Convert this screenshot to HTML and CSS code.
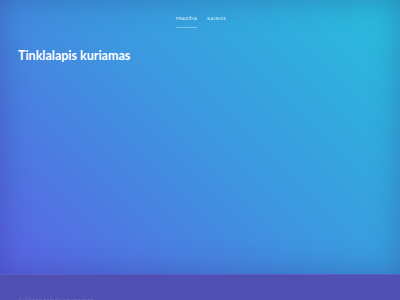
FILE: index.html
```html
<!DOCTYPE html>
<html lang="lt">
  <head>
    <meta charset="UTF-8" />
    <meta name="viewport" content="width=device-width, initial-scale=1.0" />
    <title>Tinklalapis kuriamas</title>
    <link rel="stylesheet" href="styles.css">
  </head>
  <body>
    <div class="hero">
      <nav class="nav">
        <a href="#" class="nav-link active">Pradžia</a>
        <a href="#" class="nav-link">Kainos</a>
      </nav>
      <div class="content">
        <h1>Tinklalapis kuriamas</h1>
      </div>
    </div>
    <footer class="footer">
      <p>© Visos teisės saugomos</p>
    </footer>
  </body>
</html>
```

FILE: styles.css
```css
body {
  font-family: Lato, "Open Sans", sans-serif;
  margin: 0;
  background-color: #4f50b1;
}
.hero {
  height: 274px;
  background: linear-gradient(45deg, #5b62e4 0%, #3d96e0 50%, #27c0dd 100%);
  box-shadow: inset 0 0 30px rgba(40, 40, 120, 0.35);
  display: flex;
  flex-direction: column;
}
.nav {
  display: flex;
  justify-content: center;
  gap: 10px;
  padding-top: 16px;
  padding-left: 2px;
}
.nav-link {
  color: rgba(255, 255, 255, 0.75);
  text-decoration: none;
  text-transform: uppercase;
  font-size: 4px;
  letter-spacing: 0.6px;
  font-weight: 700;
  padding-bottom: 6px;
  border-bottom: 1px solid transparent;
}
.nav-link.active {
  border-bottom-color: rgba(255, 255, 255, 0.35);
}
.content {
  padding: 0 18px;
}
h1 {
  color: #ffffff;
  font-size: 12.5px;
  font-weight: 700;
  margin: 20px 0 0;
}
.footer {
  height: 26px;
  border-top: 1px solid #5a5cc8;
  overflow: hidden;
}
.footer p {
  margin: 21px 0 0 18px;
  font-size: 7px;
  color: rgba(255, 255, 255, 0.2);
}
```
